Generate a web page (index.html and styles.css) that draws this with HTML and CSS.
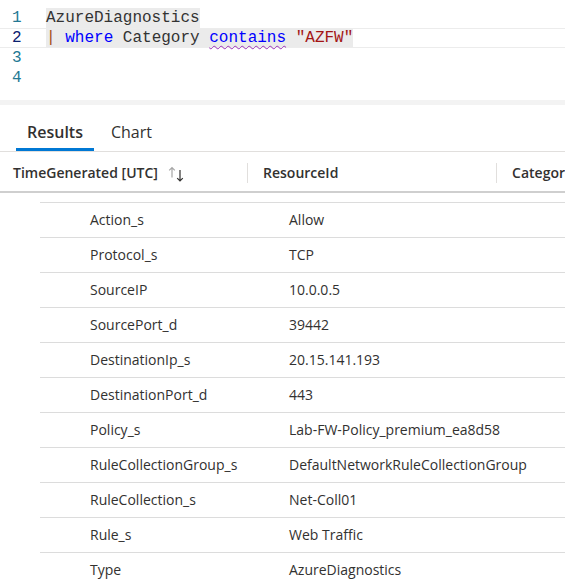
FILE: index.html
```html
<!DOCTYPE html>
<html>
<head>
<meta charset="utf-8">
<link rel="stylesheet" href="styles.css">
</head>
<body>
<div class="editor">
  <div class="line"><span class="ln">1</span><span class="code sel">AzureDiagnostics</span></div>
  <div class="line cur"><span class="ln ln-cur">2</span><span class="code sel"><span class="pipe">|</span> <span class="kw">where</span> Category <span class="kw squig">contains</span> <span class="str">"AZFW"</span></span></div>
  <div class="line"><span class="ln">3</span><span class="code"></span></div>
  <div class="line"><span class="ln">4</span><span class="code"></span></div>
</div>
<div class="band"></div>
<div class="tabs">
  <div class="tab active">Results</div>
  <div class="tab">Chart</div>
</div>
<div class="thead">
  <div class="th th1">TimeGenerated [UTC]
    <svg class="sort" width="20" height="16" viewBox="0 0 20 16"><path d="M4 1.5v10M1.2 4.3L4 1.5l2.8 2.8" stroke="#a6a6a6" stroke-width="1.2" fill="none"/><path d="M12 4v11M9.2 12.2L12 15l2.8-2.8" stroke="#323130" stroke-width="1.2" fill="none"/></svg>
  </div>
  <div class="sep"></div>
  <div class="th th2">ResourceId</div>
  <div class="sep"></div>
  <div class="th th3">Categor</div>
</div>
<div class="rows">
  <div class="row"><span class="k">Action_s</span><span class="v">Allow</span></div>
  <div class="row"><span class="k">Protocol_s</span><span class="v">TCP</span></div>
  <div class="row"><span class="k">SourceIP</span><span class="v">10.0.0.5</span></div>
  <div class="row"><span class="k">SourcePort_d</span><span class="v">39442</span></div>
  <div class="row"><span class="k">DestinationIp_s</span><span class="v">20.15.141.193</span></div>
  <div class="row"><span class="k">DestinationPort_d</span><span class="v">443</span></div>
  <div class="row"><span class="k">Policy_s</span><span class="v">Lab-FW-Policy_premium_ea8d58</span></div>
  <div class="row"><span class="k">RuleCollectionGroup_s</span><span class="v">DefaultNetworkRuleCollectionGroup</span></div>
  <div class="row"><span class="k">RuleCollection_s</span><span class="v">Net-Coll01</span></div>
  <div class="row"><span class="k">Rule_s</span><span class="v">Web Traffic</span></div>
  <div class="row"><span class="k">Type</span><span class="v">AzureDiagnostics</span></div>
</div>
</body>
</html>
```
FILE: styles.css
```css
* { box-sizing: border-box; }
html, body { margin: 0; padding: 0; background: #fff; overflow: hidden; }
body {
  width: 565px; height: 583px;
  font-family: "Open Sans", "Noto Sans", sans-serif;
  color: #323130;
}
.editor { padding-top: 8px; height: 100px; }
.line { display: flex; height: 20px; align-items: stretch; }
.line.cur { border-top: 1px solid #ececec; border-bottom: 1px solid #ececec; height: 20px; }
.ln {
  width: 46px; padding-left: 12px;
  font-family: "Liberation Mono", monospace; font-size: 16px;
  color: #237893; line-height: 21px;
}
.ln-cur { color: #0b216f; }
.cur .ln { line-height: 19px; }
.code {
  font-family: "Liberation Mono", monospace; font-size: 16px;
  color: #333; line-height: 21px; white-space: pre;
}
.cur .code { line-height: 19px; }
.sel { background: #ebebeb; }
.kw { color: #0000ff; }
.str { color: #a31515; }
.pipe { color: #a34a15; }
.squig { text-decoration: underline wavy #9b30b8; text-decoration-thickness: 1px; text-underline-offset: 3px; }
.band { height: 5px; background: #f3f3f3; }
.tabs {
  display: flex; height: 47px; padding-left: 16px; gap: 6px;
  border-bottom: 1px solid #e1dfdd;
  align-items: stretch;
}
.tab {
  padding: 0 11px; font-size: 16px; line-height: 16px;
  padding-top: 19px; color: #323130;
}
.tab.active { font-weight: 600; border-bottom: 3px solid #0078d4; }
.thead {
  display: flex; align-items: center; height: 41px;
  border-bottom: 2px solid #cfcfcf;
  font-size: 14px; font-weight: 600; white-space: nowrap;
  padding-top: 2px;
}
.th { padding-left: 13px; display: flex; align-items: center; }
.th1 { width: 248px; }
.th2 { width: 249px; padding-left: 15px; }
.th3 { padding-left: 15px; }
.sort { margin-left: 10px; margin-top: 2px; }
.sep { width: 1px; height: 20px; background: #e1dfdd; }
.rows { padding-left: 40px; padding-top: 9px; }
.row {
  display: flex; align-items: center; height: 35px;
  border-top: 1px solid #dcdcdc; font-size: 14px; white-space: nowrap;
  padding-bottom: 1px;
}
.k { width: 249px; padding-left: 50px; }
```
